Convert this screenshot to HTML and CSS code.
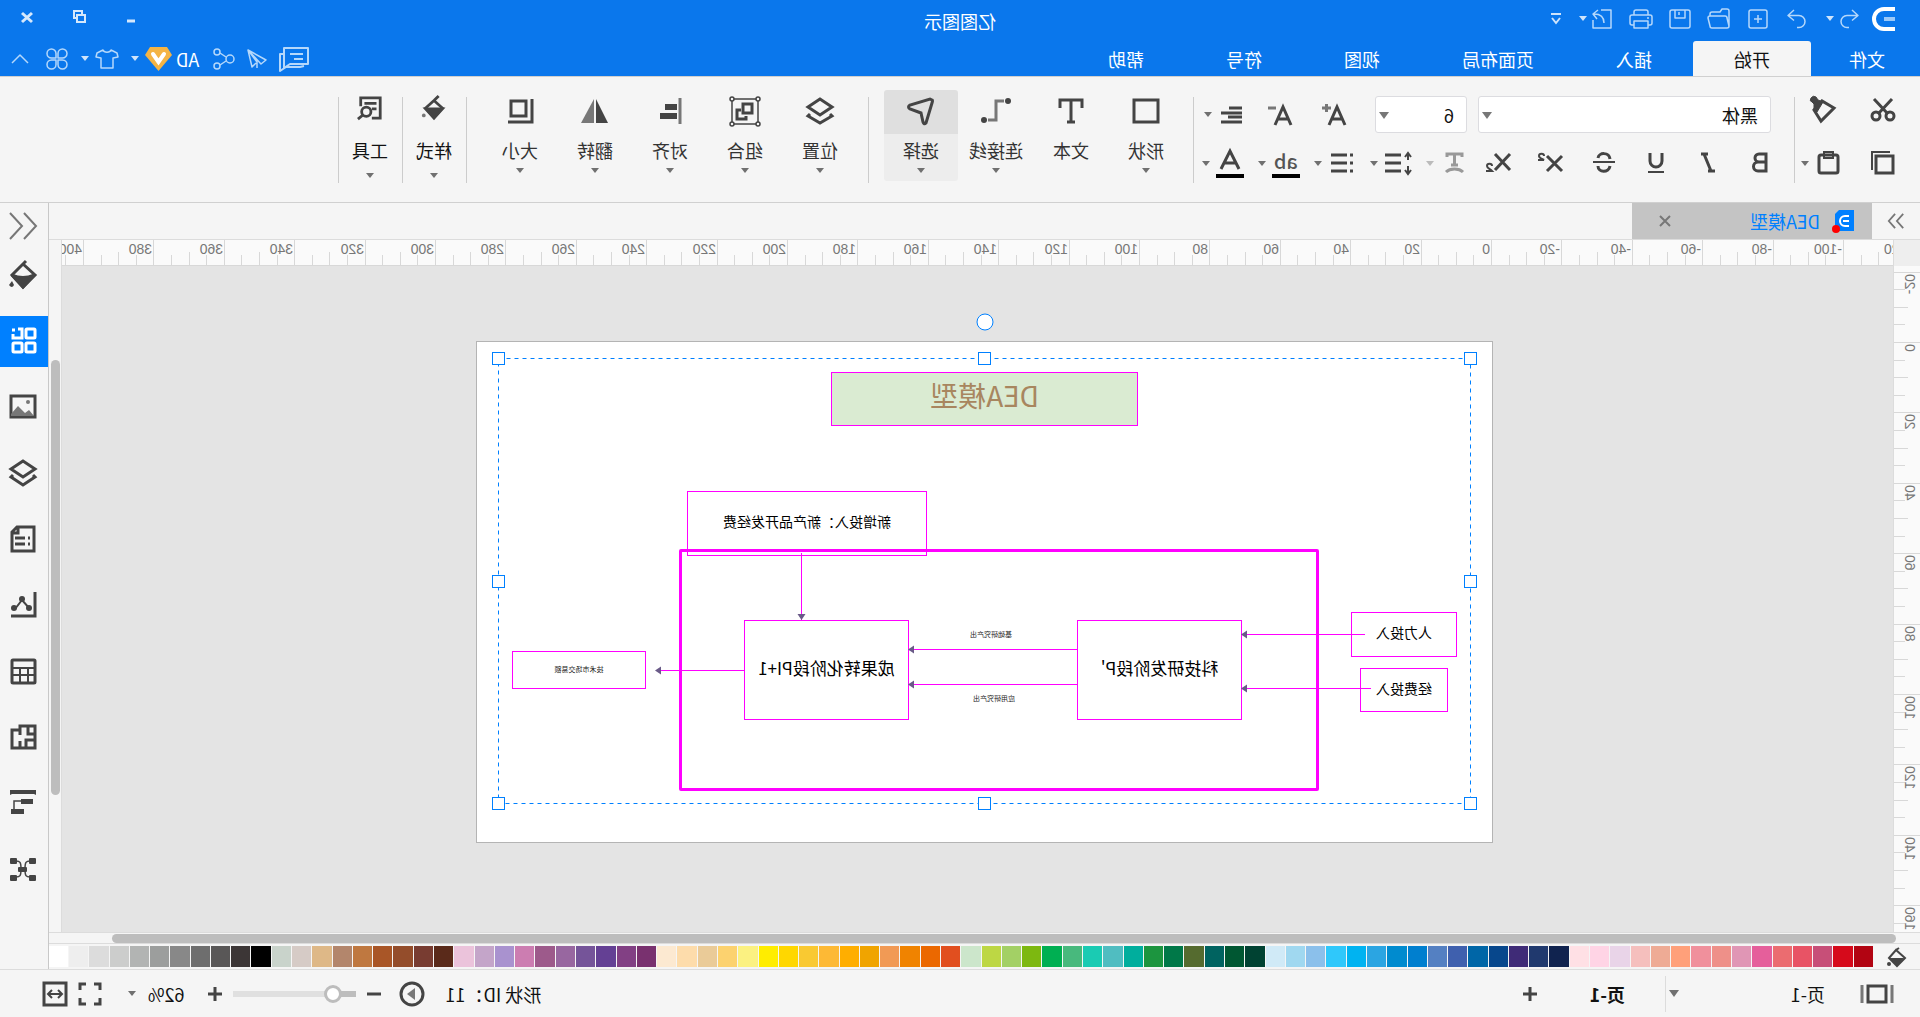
FILE: index.html
```html
<!DOCTYPE html>
<html lang="zh-CN">
<head>
<meta charset="utf-8">
<title>亿图图示</title>
<link rel="stylesheet" href="styles.css">
</head>
<body>
<div class="app">
  <header class="header">
    <div class="titlebar">
      <div class="quick">
        <svg class="logo" viewBox="0 0 22 24"><path d="M0 2H11a9 9 0 0 1 0 20H0" fill="none" stroke="#fff" stroke-width="4"/><path d="M0 12h11" stroke="#9cc9f8" stroke-width="4"/></svg>
        <div class="quick-tools">
          <span class="pair">
            <button class="icon" aria-label="撤销"><svg viewBox="0 0 24 24"><path d="M9 3 3 8.500l6 5M3.500 8.500H14a6 6 0 0 1 0 12h-2"/></svg></button>
            <button class="drop" aria-label="撤销列表"><i class="caret"></i></button>
          </span>
          <button class="icon" aria-label="恢复"><svg viewBox="0 0 24 24"><path d="m15 3 6 5.500-6 5M20.500 8.500H10a6 6 0 0 0 0 12h2"/></svg></button>
          <button class="icon" aria-label="新建"><svg viewBox="0 0 24 24"><rect x="3" y="3" width="18" height="18" rx="2"/><path d="M12 8v8M8 12h8"/></svg></button>
          <button class="icon" aria-label="打开"><svg viewBox="0 0 24 24"><path d="M2 19V4a2 2 0 0 1 2-2h5l2 3h8a2 2 0 0 1 2 2v2M2 19l2-8a2 2 0 0 1 2-2h15a2 2 0 0 1 2 2l-2 8a2 2 0 0 1-2 2H4a2 2 0 0 1-2-2z"/></svg></button>
          <button class="icon" aria-label="保存"><svg viewBox="0 0 24 24"><rect x="2" y="3" width="20" height="18" rx="2"/><path d="M7 3v8h10V3M13 5v3"/></svg></button>
          <button class="icon" aria-label="打印"><svg viewBox="0 0 24 24"><path d="M5 8V5a2 2 0 0 1 2-2h10a2 2 0 0 1 2 2v3M5 18H3a2 2 0 0 1-2-2v-6a2 2 0 0 1 2-2h18a2 2 0 0 1 2 2v6a2 2 0 0 1-2 2h-2M5 14h14v7H5zM4 11h2"/></svg></button>
          <span class="pair">
            <button class="icon" aria-label="导出"><svg viewBox="0 0 24 24"><path d="M13 3H3v18h18v-8M10 16c0-6 3-9 10-9M16 3l5 4-4 5"/></svg></button>
            <button class="drop" aria-label="导出选项"><i class="caret"></i></button>
          </span>
          <button class="customise" aria-label="自定义"><svg viewBox="0 0 12 12"><path d="M1 1h10M2 5l4 5 4-5"/></svg></button>
        </div>
      </div>
      <div class="title">亿图图示</div>
      <div class="window-buttons">
        <button class="icon" aria-label="最小化"><svg viewBox="0 0 24 24"><path d="M8 16h8" stroke-width="3"/></svg></button>
        <button class="icon" aria-label="还原"><svg viewBox="0 0 24 24"><path d="M6 10h8v7H6zM9 9V6h8v7h-2" stroke-width="2"/></svg></button>
        <button class="icon" aria-label="关闭"><svg viewBox="0 0 24 24"><path d="m7 8 10 9M17 8 7 17" stroke-width="3"/></svg></button>
      </div>
    </div>
    <div class="menubar">
      <nav class="menu">
        <a class="file" href="#file">文件</a>
        <a class="active" href="#home">开始</a>
        <a href="#insert">插入</a>
        <a href="#layout">页面布局</a>
        <a href="#view">视图</a>
        <a href="#symbol">符号</a>
        <a href="#help">帮助</a>
      </nav>
      <div class="account">
        <button class="icon wide" aria-label="评论"><svg viewBox="0 0 30 24"><path d="M1 1h24v20l-6-4H1zM25 7h4v17l-6-4H9l-4-1M6 7h13M6 12h9" stroke-width="2"/></svg></button>
        <button class="icon" aria-label="发送"><svg viewBox="0 0 24 24"><path d="M21 3 3 13l5 4zM21 3l-4 17-4-4M21 3l-9 12v6"/></svg></button>
        <button class="icon" aria-label="分享"><svg viewBox="0 0 24 24"><circle cx="5" cy="12" r="4"/><circle cx="18" cy="5" r="3"/><circle cx="18" cy="19" r="3"/><path d="m9 10 6-4M9 14l6 4"/></svg></button>
        <span class="pair vip">
          <span class="user">AD</span>
          <svg class="gem" viewBox="0 0 27 24"><path d="M5 0h17l5 8-13.500 16L0 8z" fill="#f4b445"/><path d="m8 7 5.500 8L19 7" fill="none" stroke="#fff" stroke-width="4" stroke-linecap="round"/></svg>
          <button class="drop" aria-label="账户"><i class="caret"></i></button>
        </span>
        <span class="pair">
          <button class="icon" aria-label="皮肤"><svg viewBox="0 0 24 24"><path d="M8 3c1 3 7 3 8 0l6 3 1 4-5 1v10H6V11l-5-1 1-4z"/></svg></button>
          <button class="drop" aria-label="皮肤选项"><i class="caret"></i></button>
        </span>
        <button class="icon" aria-label="应用"><svg viewBox="0 0 24 24"><path d="M11 11H6.500A4.500 4.500 0 1 1 11 6.500zM13 11V6.500a4.500 4.500 0 1 1 4.500 4.500zM11 13v4.500A4.500 4.500 0 1 1 6.500 13zM13 13h4.500a4.500 4.500 0 1 1-4.500 4.500z"/></svg></button>
        <button class="icon wide" aria-label="收起"><svg viewBox="0 0 30 24"><path d="m7 16 8-8 8 8"/></svg></button>
      </div>
    </div>
  </header>

  <div class="ribbon">
    <section class="group clipboard">
      <div class="row">
        <button class="tool" aria-label="剪切"><svg viewBox="0 0 28 28"><path d="m5 3 14 15M23 3 9 18"/><circle cx="7" cy="20" r="4"/><circle cx="21" cy="20" r="4"/></svg></button>
        <button class="tool" aria-label="格式刷"><svg viewBox="0 0 28 28"><path d="m3 12 12-7 8 9-7 11z"/><path d="m14 6 5-2 2-3q3-2 5 1t-1 4l-2 2v6l-3 2z" fill="#444" stroke-width="1"/></svg></button>
      </div>
      <div class="row">
        <button class="tool" aria-label="复制"><svg viewBox="0 0 28 28"><path d="M4 7h17v17H4z"/><path d="M7 3h18v18" stroke-width="2"/></svg></button>
        <span class="pair">
          <button class="tool" aria-label="粘贴"><svg viewBox="0 0 28 28"><rect x="4" y="6" width="19" height="18" rx="2"/><path d="M9 3h9v6H9z" stroke-width="2"/></svg></button>
          <button class="drop" aria-label="粘贴选项"><i class="caret"></i></button>
        </span>
      </div>
    </section>
    <section class="group font">
      <div class="row">
        <label class="select family"><select aria-label="字体"><option>黑体</option></select></label>
        <label class="select size"><select aria-label="字号"><option>6</option></select></label>
        <button class="tool" aria-label="增大字号"><svg viewBox="0 0 28 28"><path d="m5 24 8-18 8 18M8 18h10"/><path d="M19 7h9M23.500 3v8" stroke="#777"/></svg></button>
        <button class="tool" aria-label="减小字号"><svg viewBox="0 0 28 28"><path d="m5 24 8-18 8 18M8 18h10"/><path d="M20 7h8" stroke="#777"/></svg></button>
        <span class="pair align">
          <button class="tool" aria-label="对齐方式"><svg viewBox="0 0 28 28"><path d="M4 7h13M4 12h21M4 16h14M4 21h21"/></svg></button>
          <button class="drop" aria-label="对齐选项"><i class="caret"></i></button>
        </span>
      </div>
      <div class="row format">
        <button class="tool" aria-label="粗体"><svg viewBox="0 0 28 28"><path d="M8 5h7a4 4 0 0 1 0 8H8zM8 13h8a4.500 4.500 0 0 1 0 9H8z"/></svg></button>
        <button class="tool" aria-label="斜体"><svg viewBox="0 0 28 28"><path d="M14 5h7M7 22h7M18 5l-7 17"/></svg></button>
        <button class="tool" aria-label="下划线"><svg viewBox="0 0 28 28"><path d="M8 4v8a6 6 0 0 0 12 0V4"/><path d="M6 23h16" stroke-width="2"/></svg></button>
        <button class="tool" aria-label="删除线"><svg viewBox="0 0 28 28"><path d="M20 9c-1-6-11-6-12 1M8 17c1 7 12 7 12 0"/><path d="M3 13h22" stroke-width="2"/></svg></button>
        <button class="tool" aria-label="上标"><svg viewBox="0 0 28 28"><path d="m4 7 15 15M19 7 4 22"/><path d="M22 7c0-3 5-3 5 0 0 2-3 3-5 4h6" stroke-width="2"/></svg></button>
        <button class="tool" aria-label="下标"><svg viewBox="0 0 28 28"><path d="m4 5 15 16M19 5 4 21"/><path d="M22 17c0-3 5-3 5 0 0 2-3 3-5 5h6" stroke-width="2"/></svg></button>
        <span class="pair muted">
          <button class="tool" aria-label="文字效果"><svg viewBox="0 0 28 28"><path d="M6 8V5h15v3M13.500 5v11M10 16h7M5 23c4-4 13-4 17 0" stroke="#999"/></svg></button>
          <button class="drop" aria-label="文字效果选项"><i class="caret"></i></button>
        </span>
        <span class="pair">
          <button class="tool" aria-label="行距"><svg viewBox="0 0 28 28"><path d="M11 6h16M11 14h16M11 22h16"/><path d="M4 4v7M1 8l3-4 3 4M4 17v7M1 21l3 4 3-4" stroke-width="2"/></svg></button>
          <button class="drop" aria-label="行距选项"><i class="caret"></i></button>
        </span>
        <span class="pair">
          <button class="tool" aria-label="项目符号"><svg viewBox="0 0 28 28"><path d="M9 6h16M9 14h16M9 22h16M3 6h3M3 14h3M3 22h3"/></svg></button>
          <button class="drop" aria-label="项目符号选项"><i class="caret"></i></button>
        </span>
        <span class="pair">
          <button class="tool swatch-text" aria-label="突出显示"><span>ab</span></button>
          <button class="drop" aria-label="突出显示颜色"><i class="caret"></i></button>
        </span>
        <span class="pair">
          <button class="tool swatch-icon" aria-label="字体颜色"><svg viewBox="0 0 28 28"><path d="m5 22 9-18 9 18M8 16h12"/></svg></button>
          <button class="drop" aria-label="字体颜色选项"><i class="caret"></i></button>
        </span>
      </div>
    </section>
    <section class="group big">
      <button class="large"><svg viewBox="0 0 28 28"><rect x="2" y="3" width="24" height="22"/></svg><span>形状</span><i class="caret"></i></button>
      <button class="large"><svg viewBox="0 0 28 28"><path d="M3 11V3h22v8M14 3v22M10 25h8"/></svg><span>文本</span></button>
      <button class="large"><svg viewBox="0 0 28 28"><circle cx="2" cy="4" r="3" fill="#444" stroke="none"/><circle cx="26" cy="23" r="3" fill="#444" stroke="none"/><path d="M6 4h8v19h8" stroke="#777"/></svg><span>连接线</span><i class="caret"></i></button>
      <button class="large selected"><svg viewBox="0 0 28 28"><path d="M3 3q-1 0 0 3l6 20q2 2 3-1l2-9 11-4q3-2 0-4L5 2z"/></svg><span>选择</span><i class="caret"></i></button>
    </section>
    <section class="group big arrange">
      <button class="large"><svg viewBox="0 0 28 28"><path d="m14 2 12 8-12 8-12-8zM4 17l-2 2 12 7 12-7-2-2"/></svg><span>位置</span><i class="caret"></i></button>
      <button class="large"><svg viewBox="0 0 28 28"><path d="M1 2h26v25H1z" stroke-width="1.500"/><path d="M7 7h9v9H7z"/><path d="M18 13h4v9h-9v-3"/><g fill="#f5f5f5" stroke-width="1.500"><circle cx="1" cy="2" r="2"/><circle cx="27" cy="2" r="2"/><circle cx="1" cy="27" r="2"/><circle cx="27" cy="27" r="2"/></g></svg><span>组合</span><i class="caret"></i></button>
      <button class="large"><svg viewBox="0 0 28 28"><path d="M4 1v26" stroke="#777"/><path d="M7 7h12v6H7zM7 16h17v6H7z" fill="#444" stroke="none"/></svg><span>对齐</span><i class="caret"></i></button>
      <button class="large"><svg viewBox="0 0 28 28"><path d="M13 2v24H1z" fill="#444" stroke="none"/><path d="M15 2v24h13z" fill="#777" stroke="none"/></svg><span>翻转</span><i class="caret"></i></button>
      <button class="large"><svg viewBox="0 0 28 28"><path d="M8 4h15v15H8z"/><path d="M2 2v23h24"/></svg><span>大小</span><i class="caret"></i></button>
    </section>
    <section class="group narrow">
      <button class="large"><svg viewBox="0 0 28 28"><path d="m14 6 9 8-9 10-9-10zM14 6 9 1"/><path d="M5 15h18l-9 10z" fill="#444"/><circle cx="25" cy="22" r="2" fill="#777" stroke="none"/></svg><span>样式</span><i class="caret"></i></button>
    </section>
    <section class="group narrow">
      <button class="large"><svg viewBox="0 0 28 28"><path d="M12 25H3V3h21v9M7 9h13M7 15h5"/><circle cx="18" cy="18" r="5"/><path d="m21 21 6 5"/></svg><span>工具</span><i class="caret"></i></button>
    </section>
  </div>

  <main class="main">
    <div class="editor">
      <div class="doc-tabs">
        <button class="expand" aria-label="展开"><svg viewBox="0 0 20 20"><path d="m2 2 7 8-7 8M11 2l7 8-7 8"/></svg></button>
        <div class="doc-tab">
          <svg class="doc-icon" viewBox="0 0 22 22"><path d="M0 0h15l4 4v17H0z" fill="#0080ff"/><path d="M5 6h4a5 5 0 0 1 0 10H5M5 11h6" fill="none" stroke="#fff" stroke-width="2"/><circle cx="18" cy="19" r="4" fill="#f00"/></svg>
          <span>DEA模型</span>
          <button class="close" aria-label="关闭文档"><svg viewBox="0 0 12 12"><path d="m1 1 10 10M11 1 1 11"/></svg></button>
        </div>
      </div>
      <div class="stage">
        <div class="corner"></div>
        <svg class="ruler ruler-h" id="rulerH"></svg>
        <div class="ruler-end"></div>
        <svg class="ruler ruler-v" id="rulerV"></svg>
        <div class="canvas">
          <div class="page">
            <div class="node heading">DEA模型</div>
            <div class="node extra">新增投入：新产品开发经费</div>
            <div class="node frame"></div>
            <div class="node research">科技研发阶段P'</div>
            <div class="node transfer">成果转化阶段PI+1</div>
            <div class="node labour">人力投入</div>
            <div class="node funds">经费投入</div>
            <div class="node market">技术市场交易额</div>
            <div class="note basic">基础研究产出</div>
            <div class="note applied">应用研究产出</div>
            <svg class="links" viewBox="0 0 1015 500">
              <g fill="none" stroke="#f0f">
                <path d="M127 292.500h123M121 346.500h129M415 307.500h168M415 342.500h168M748 328.500h88M690.500 211v67"/>
              </g>
              <g fill="#6a5a88">
                <path d="m251 292.500-6-4v8zM251 346.500l-6-4v8zM584 307.500l-6-4v8zM584 342.500l-6-4v8zM837 328.500l-6-4v8zM690.500 278l-4-6h8z"/>
              </g>
              <rect x="21.500" y="16.500" width="972" height="445" fill="none" stroke="#0080ff" stroke-dasharray="4 4"/>
              <g fill="#fff" stroke="#0080ff">
                <rect x="15.500" y="10.500" width="12" height="12"/><rect x="501.500" y="10.500" width="12" height="12"/><rect x="987.500" y="10.500" width="12" height="12"/>
                <rect x="15.500" y="233.500" width="12" height="12"/><rect x="987.500" y="233.500" width="12" height="12"/>
                <rect x="15.500" y="455.500" width="12" height="12"/><rect x="501.500" y="455.500" width="12" height="12"/><rect x="987.500" y="455.500" width="12" height="12"/>
                <circle cx="507" cy="-20" r="8"/>
              </g>
            </svg>
          </div>
        </div>
        <div class="scroll-v"><div class="thumb"></div></div>
      </div>
      <div class="scroll-h"><div class="thumb"></div></div>
      <div class="palette">
        <svg class="bucket" viewBox="0 0 20 20"><path d="m11 3 7 8-8 8-8-8zM11 3 8 1" fill="none" stroke="#444" stroke-width="2"/><path d="M3 11h15l-8 8z" fill="#444"/><circle cx="18" cy="17" r="2" fill="#444"/></svg>
        <div class="swatches" id="swatches"></div>
      </div>
    </div>

    <aside class="sidebar">
      <button class="collapse" aria-label="收起面板"><svg viewBox="0 0 28 28"><path d="M13 1 1 14l12 13M27 1 15 14l12 13" stroke="#777" stroke-width="2"/></svg></button>
      <button aria-label="填充"><svg viewBox="0 0 28 28"><path d="m14 3 11 11-11 12L2 14zM14 3l-3-3"/><path d="M3 14q11 5 22 0L14 26z" fill="#444"/><path d="m25 20 3 4q-3 4-5 0z" fill="#444" stroke="none"/></svg></button>
      <button class="active" aria-label="符号库"><svg viewBox="0 0 28 28"><g stroke="#fff"><rect x="2" y="2" width="9" height="9" rx="1"/><rect x="2" y="16" width="9" height="9" rx="1"/><rect x="15" y="16" width="9" height="9" rx="1"/><path d="M19 2h-4v9h9V7M22 3h3"/></g></svg></button>
      <button aria-label="图片"><svg viewBox="0 0 28 28"><rect x="2" y="3" width="24" height="21"/><path d="m3 23 5-6 4 3 7-7 7 8v2z" fill="#777" stroke="none"/><circle cx="9" cy="9" r="2" fill="#777" stroke="none"/></svg></button>
      <button aria-label="图层"><svg viewBox="0 0 28 28"><path d="m14 2 12 8-12 8-12-8zM4 16l-2 2 12 8 12-8-2-2"/></svg></button>
      <button aria-label="备注"><svg viewBox="0 0 28 28"><path d="M3 2h17l5 5v19H3zM19 3v5h5M7 13h2M12 13h10M7 19h2M12 19h10"/></svg></button>
      <button aria-label="图表"><svg viewBox="0 0 28 28"><path d="M2 1v24h24"/><path d="m7 18 8-9 7 9" stroke-width="2"/><g fill="#444" stroke="none"><circle cx="8" cy="17" r="3"/><circle cx="15" cy="8" r="3"/><circle cx="23" cy="17" r="3"/></g></svg></button>
      <button aria-label="表格"><svg viewBox="0 0 28 28"><rect x="2" y="3" width="23" height="23" rx="1"/><path d="M2 11h23M2 18h23M9 11v15M17 11v15" stroke-width="2"/></svg></button>
      <button aria-label="平面图"><svg viewBox="0 0 28 28"><path d="M2 3h15v4h8v18H2zM9 3v8H2M17 7v5M2 17h9v8M17 25v-7"/></svg></button>
      <button aria-label="甘特图"><svg viewBox="0 0 28 28"><path d="M1 6V1h26v5l-2-1H3z" fill="#444" stroke="none"/><path d="M4 10h12v5H4zM13 20h13v5H13z" fill="#444" stroke="none"/><path d="M15 12h8v10" stroke-width="1.500"/></svg></button>
      <button aria-label="思维导图"><svg viewBox="0 0 28 28"><g fill="#444" stroke="none"><rect x="1" y="3" width="7" height="6" rx="1"/><rect x="20" y="3" width="7" height="6" rx="1"/><rect x="1" y="20" width="7" height="6" rx="1"/><rect x="20" y="20" width="7" height="6" rx="1"/><rect x="10" y="12" width="9" height="5" rx="1"/></g><path d="M7 6c4 0 5 1 5 8s-1 8-5 8M21 6c-4 0-5 1-5 8s1 8 5 8" stroke-width="1.500"/></svg></button>
    </aside>
  </main>

  <footer class="status">
    <div class="pages">
      <svg class="panel-icon" viewBox="0 0 34 20"><rect x="8" y="2" width="18" height="16" fill="none" stroke="#444" stroke-width="3"/><path d="M2 1v18M32 1v18" stroke="#777" stroke-width="3"/></svg>
      <button class="page-select"><span>页-1</span><i class="caret large-caret"></i></button>
      <a class="page-tab" href="#page1">页-1</a>
      <button class="tool" aria-label="添加页"><svg viewBox="0 0 28 28"><path d="M14 7v14M7 14h14"/></svg></button>
    </div>
    <div class="view">
      <span class="shape-id">形状 ID：11</span>
      <button class="tool" aria-label="播放"><svg viewBox="0 0 28 28"><circle cx="14" cy="14" r="11"/><path d="m11 8 8 6-8 6z" fill="#777" stroke="none"/></svg></button>
      <button class="tool zoom-step" aria-label="缩小"><svg viewBox="0 0 28 28"><path d="M7 14h14"/></svg></button>
      <input class="zoom" type="range" min="0" max="100" value="13" aria-label="缩放">
      <button class="tool zoom-step" aria-label="放大"><svg viewBox="0 0 28 28"><path d="M14 7v14M7 14h14"/></svg></button>
      <span class="percent">62%</span>
      <button class="drop" aria-label="缩放比例"><i class="caret"></i></button>
      <button class="tool fit" aria-label="全屏"><svg viewBox="0 0 28 28"><path d="M4 10V4h6M18 4h6v6M24 18v6h-6M10 24H4v-6"/></svg></button>
      <button class="tool" aria-label="适应宽度"><svg viewBox="0 0 28 28"><rect x="3" y="3" width="22" height="22"/><path d="M8 14h12M11 10l-4 4 4 4M17 10l4 4-4 4" stroke-width="2"/></svg></button>
    </div>
  </footer>
</div>
<script src="app.js"></script>
</body>
</html>
```
FILE: styles.css
```css
* { box-sizing: border-box; }

body {
  margin: 0;
  font-family: "Noto Sans CJK SC", "Noto Sans", sans-serif;
  font-size: 18px;
  color: #111;
}

button {
  display: flex;
  align-items: center;
  justify-content: center;
  flex: none;
  padding: 0;
  border: 0;
  background: none;
  font: inherit;
  color: inherit;
}

a { color: inherit; text-decoration: none; }
svg { display: block; flex: none; overflow: visible; }

/* The whole interface is shown as a mirror image. */
.app {
  display: flex;
  flex-direction: column;
  min-height: 100vh;
  background: #f5f5f5;
  transform: scaleX(-1);
}

.caret {
  width: 0;
  border: 4px solid transparent;
  border-top: 5px solid #707070;
  border-bottom: 0;
}
.pair { display: flex; align-items: center; gap: 2px; flex: none; }
.drop { width: 16px; height: 24px; }

/* Header */
.header { background: #0a77ec; color: #fff; }
.header .caret { border-top-color: #cfe4fb; }
.header .drop { width: 12px; }
.header .pair { gap: 1px; }
.icon { width: 24px; height: 24px; }
.icon svg { width: 24px; height: 24px; fill: none; stroke: #b5d8fb; stroke-width: 1.5; stroke-linejoin: round; }
.icon.wide, .icon.wide svg { width: 30px; }

.titlebar {
  display: grid;
  grid-template-columns: 1fr auto 1fr;
  align-items: center;
  height: 41px;
}
.quick { display: flex; align-items: center; gap: 12px; padding: 0 0 4px 25px; }
.logo { width: 22px; height: 24px; }
.quick-tools { display: flex; align-items: center; gap: 15px; }
.customise svg { width: 12px; height: 12px; fill: none; stroke: #cfe4fb; stroke-width: 2; }
.title { line-height: 40px; }
.window-buttons { display: flex; justify-content: flex-end; gap: 28px; padding: 0 15px 8px 0; }
.window-buttons .icon svg { stroke: #d5e8fc; stroke-linejoin: miter; }

.menubar { display: flex; justify-content: space-between; height: 35px; }
.menu { display: flex; }
.menu a { padding: 0 41px; line-height: 36px; }
.menu .file { padding: 0 38px 0 35px; }
.menu .active { background: #f5f5f5; color: #111; border-radius: 3px 3px 0 0; }
.account { display: flex; align-items: center; gap: 10px; padding-right: 5px; }
.account .pair { gap: 4px; }
.vip { margin-left: 2px; }
.gem { width: 27px; height: 24px; }

/* Ribbon */
.ribbon {
  display: flex;
  height: 127px;
  padding-top: 13px;
  border-top: 1px solid #d0d0d0;
  border-bottom: 1px solid #d0d0d0;
}
.group { position: relative; flex: none; }
.group::after {
  content: "";
  position: absolute;
  top: 7px;
  right: 0;
  width: 1px;
  height: 86px;
  background: #ccc;
}
.row { display: flex; align-items: center; }
.tool { width: 28px; height: 28px; }
.tool svg { width: 28px; height: 28px; }
.tool svg, .large svg, .sidebar svg { fill: none; stroke: #444; stroke-width: 3; }

.clipboard { width: 126px; padding: 6px 0 0 23px; }
.clipboard .row { height: 28px; gap: 32px; }
.clipboard .row + .row { height: 36px; margin-top: 21px; gap: 27px; }
.clipboard .pair { gap: 1px; }

.font { width: 601px; padding: 6px 7px 0 23px; }
.font .row { height: 37px; }
.select {
  position: relative;
  flex: none;
  height: 37px;
  border: 1px solid #dcdce0;
  border-radius: 3px;
  background: #fff;
}
.select::after {
  content: "";
  position: absolute;
  top: 15px;
  right: 3px;
  border: 5px solid transparent;
  border-top: 7px solid #777;
  border-bottom: 0;
}
.family { width: 293px; margin-right: 11px; }
.size { width: 92px; margin-right: 25px; }
select {
  appearance: none;
  width: 100%;
  height: 100%;
  padding: 0 12px;
  border: 0;
  background: transparent;
  font: inherit;
  color: #111;
}
.size + .tool { margin-right: 26px; }
.align { margin-left: auto; }
.font .format { height: 36px; margin-top: 12px; margin-left: -3px; gap: 24px; }
.format .pair + .pair { margin-left: -14px; }
.format .tool + .pair { margin-left: -6px; }
.muted .caret { border-top-color: #bbb; }
.swatch-text, .swatch-icon { border-bottom: 4px solid #000; height: 30px; }
.swatch-text span { font-size: 20px; font-weight: 500; line-height: 24px; color: #555; }

.big { display: flex; gap: 1px; padding: 0 16px 0 10px; }
.arrange { padding: 0 17px 0 11px; }
.large {
  flex-direction: column;
  justify-content: flex-start;
  width: 74px;
  height: 91px;
  border-radius: 3px;
  color: #333;
}
.large svg { width: 28px; height: 28px; margin: 7px 0 9px; }
.large span { line-height: 32px; }
.large .caret { margin-top: 2px; }
.selected { background: linear-gradient(#dfdfdf 44px, #ededed 44px); }
.narrow .large { width: 64px; color: #111; }
.narrow .large svg { width: 26px; height: 26px; margin: 5px 0 13px; }
.narrow .large .caret { margin-top: 7px; }

/* Workspace */
.main { display: flex; flex: 1; }
.editor { display: flex; flex-direction: column; flex: 1; min-width: 0; }
.doc-tabs { display: flex; height: 37px; border-bottom: 1px solid #dcdcdc; }
.expand { width: 48px; }
.expand svg { width: 18px; height: 18px; fill: none; stroke: #777; stroke-width: 2; }
.doc-tab {
  display: flex;
  align-items: center;
  gap: 12px;
  width: 240px;
  padding: 0 27px 0 18px;
  background: #c4c4c4;
  color: #0080ff;
}
.doc-icon { width: 22px; height: 22px; }
.close { margin-left: auto; }
.close svg { width: 12px; height: 12px; stroke: #777; stroke-width: 2; }

.stage {
  display: grid;
  grid-template: 26px 1fr / 27px 1fr 13px;
  flex: 1;
  min-height: 560px;
}
.ruler {
  width: 100%;
  height: 100%;
  overflow: hidden;
  background: #fafafa;
  font-family: "Liberation Sans", sans-serif;
  font-size: 14px;
}
.ruler path { stroke: #d8d8d8; fill: none; }
.ruler text { fill: #777; }
.ruler-h { border-bottom: 1px solid #d8d8d8; }
.ruler-v { min-height: 0; contain: size; border-right: 1px solid #dcdcdc; }
.corner { background: #eee; border-right: 1px solid #dcdcdc; }
.ruler-end { border-left: 1px solid #dcdcdc; }
.canvas { padding: 75px 0 20px 400px; background: #e4e4e4; overflow: hidden; }

.scroll-v { padding: 94px 2px 0 1px; border-left: 1px solid #dcdcdc; }
.scroll-v .thumb { height: 435px; border-radius: 5px; background: #bdbdbd; }
.scroll-h { height: 12px; padding: 1px 63px 1px 24px; border: solid #dcdcdc; border-width: 1px 0; }
.scroll-h .thumb { height: 9px; border-radius: 5px; background: #bdbdbd; }

.palette { display: flex; align-items: center; height: 25px; }
.bucket { width: 20px; height: 20px; margin: 0 14px 0 13px; }
.swatches { display: flex; flex: 1; gap: 1px; height: 21px; }
.swatches button { flex: 1; }

/* Diagram */
.page {
  position: relative;
  width: 1017px;
  height: 502px;
  border: 1px solid #b4b4b4;
  background: #fff;
}
.node, .note { position: absolute; display: flex; align-items: center; justify-content: center; white-space: nowrap; }
.node { padding-bottom: 5px; border: 1px solid #f0f; font-size: 14px; color: #000; }
.heading { left: 354px; top: 30px; width: 307px; height: 54px; padding-bottom: 8px; background: #daebd2; font-size: 28px; color: #a8865f; }
.extra { left: 565px; top: 149px; width: 240px; height: 65px; }
.frame { left: 173px; top: 207px; width: 640px; height: 242px; border-width: 3px; border-radius: 2px; }
.research { left: 250px; top: 278px; width: 165px; height: 100px; font-size: 17px; }
.transfer { left: 583px; top: 278px; width: 165px; height: 100px; font-size: 17px; }
.labour { left: 35px; top: 270px; width: 106px; height: 45px; }
.funds { left: 44px; top: 326px; width: 88px; height: 44px; }
.market { left: 846px; top: 309px; width: 134px; height: 38px; padding-bottom: 2px; font-size: 7px; color: #222; }
.note { font-size: 7px; color: #222; height: 12px; }
.basic { left: 480px; top: 286px; }
.applied { left: 477px; top: 350px; }
.links { position: absolute; inset: 0; width: 100%; height: 100%; }

/* Sidebar */
.sidebar {
  display: flex;
  flex-direction: column;
  gap: 15px;
  width: 49px;
  flex: none;
  border-left: 1px solid #c8c8c8;
}
.sidebar button { height: 51px; padding: 0 0 2px 2px; }
.sidebar svg { width: 28px; height: 28px; }
.sidebar .collapse { height: 47px; margin-bottom: -15px; }
.sidebar .active { background: #0080ff; }

/* Status bar */
.status {
  display: flex;
  justify-content: space-between;
  height: 48px;
  border-top: 1px solid #dcdcdc;
}
.pages, .view { display: flex; align-items: center; }
.panel-icon { width: 34px; height: 20px; margin-left: 26px; }
.page-select {
  justify-content: space-between;
  width: 160px;
  height: 36px;
  margin-left: 35px;
  padding-right: 3px;
  border-right: 1px solid #dcdcdc;
}
.large-caret { border-width: 7px 5px 0; }
.page-tab { margin: 0 46px 0 40px; font-weight: 700; }
.view { padding-right: 41px; }
.shape-id { margin-right: 20px; }
.zoom-step { margin: 0 4px 0 10px; }
.zoom + .zoom-step { margin: 0 16px 0 4px; }
.zoom {
  appearance: none;
  width: 123px;
  height: 18px;
  margin: 0;
  background: linear-gradient(90deg, #bdbdbd 20px, #e0e0e0 20px) center / 100% 6px no-repeat;
  border-radius: 3px;
}
.zoom::-webkit-slider-thumb {
  appearance: none;
  width: 18px;
  height: 18px;
  border: 3px solid #bdbdbd;
  border-radius: 50%;
  background: #fff;
}
.view .drop { margin: 0 20px 0 8px; }
.fit { margin-right: 7px; }
```
FILE: app.js
```js
const SVG_NS = "http://www.w3.org/2000/svg";
const PX_PER_UNIT = 3.52;

function drawRuler(id, origin, vertical) {
  const svg = document.getElementById(id);
  const box = svg.getBoundingClientRect();
  const length = vertical ? box.height : box.width;
  const depth = 26;
  let lines = "";
  for (let unit = -120; origin + unit * PX_PER_UNIT < length; unit += 5) {
    const at = Math.round(origin + unit * PX_PER_UNIT);
    const size = unit % 20 === 0 ? 26 : unit % 10 === 0 ? 14 : 11;
    lines += vertical
      ? `M${depth - size} ${at + 0.5}H${depth}`
      : `M${at + 0.5} ${depth - size}V${depth}`;
    if (unit % 20 === 0 && !(vertical && at < -30)) {
      const label = document.createElementNS(SVG_NS, "text");
      label.textContent = unit;
      if (vertical) {
        label.setAttribute("transform", `translate(15 ${at + 2}) rotate(-90)`);
        label.setAttribute("text-anchor", "end");
      } else {
        label.setAttribute("x", at + 2);
        label.setAttribute("y", 14);
      }
      svg.append(label);
    }
  }
  const path = document.createElementNS(SVG_NS, "path");
  path.setAttribute("d", lines);
  svg.prepend(path);
}

drawRuler("rulerH", 401, false);
drawRuler("rulerV", 76, true);

const colors = `b20412 d60a1b c74f78 e85365 eb6c70 e55f9b e096b5 ee9089 f0909c ffa07a
eeab95 f5bfbd e9d4e8 ffd4e5 ffe0e5 10234f 20396e 3f2b77 07478c 0066a7
3f60ae 5480c2 007fcf 008bcf 2ba5e2 00b3f1 2fc8fb 8bc0eb a0d8f0 d0eaf7
004232 005732 006360 556b2f 007848 1c953f 00ae9d 50bdc1 1acbb3 48b97d
00af52 7db810 a3d065 bdd744 cce6cb e14f1f eb6800 f08300 f19a55 f0a400
ffae00 fdb935 f9c932 ffd700 ffed00 fbf181 fcd26f eacb98 fddcab fce9d1
79316f 824084 644094 755499 9867a0 9d5a8b cc7db1 a992cf c4a5c9 ebc3db
5a2a1a 783c31 944d2b a95627 bf7840 b3866c deb887 d6cbc6 c9d3cb 000000
3c3636 595757 6e6e6e 888888 9c9e9d b2b4b3 cccdcc dcdcdc eeeeee ffffff`.split(/\s+/);

const swatches = document.getElementById("swatches");
for (const color of colors) {
  const button = document.createElement("button");
  button.style.background = "#" + color;
  button.setAttribute("aria-label", "#" + color);
  swatches.append(button);
}
```
